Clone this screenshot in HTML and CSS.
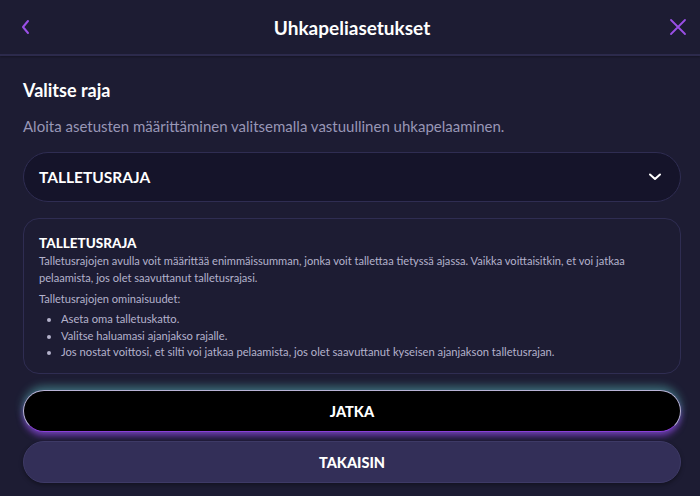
FILE: index.html
```html
<!DOCTYPE html>
<html lang="fi">
<head>
  <meta charset="UTF-8" />
  <meta name="viewport" content="width=device-width, initial-scale=1.0"/>
  <title>Uhkapeliasetukset</title>
  <link rel="stylesheet" href="styles.css">
</head>
<body>
  <header>
    <div class="back-button">
      <svg width="12" height="16" viewBox="0 0 12 16"><path d="M8 2 L3 8 L8 14" fill="none" stroke="#9a4fe6" stroke-width="2" stroke-linecap="round" stroke-linejoin="round"/></svg>
    </div>
    <div class="title-text">Uhkapeliasetukset</div>
    <div class="close-button">
      <svg width="18" height="18" viewBox="0 0 18 18"><path d="M2 2 L16 16 M16 2 L2 16" fill="none" stroke="#9a4fe6" stroke-width="1.8" stroke-linecap="round"/></svg>
    </div>
  </header>

  <main class="content">
    <h2>Valitse raja</h2>
    <p class="intro">Aloita asetusten määrittäminen valitsemalla vastuullinen uhkapelaaminen.</p>

    <div class="select-box">
      <span>TALLETUSRAJA</span>
      <svg width="14" height="10" viewBox="0 0 14 10"><path d="M2 2.5 L7 7 L12 2.5" fill="none" stroke="#ffffff" stroke-width="2" stroke-linecap="round" stroke-linejoin="round"/></svg>
    </div>

    <div class="info-box">
      <h3>TALLETUSRAJA</h3>
      <p>Talletusrajojen avulla voit määrittää enimmäissumman, jonka voit tallettaa tietyssä ajassa. Vaikka voittaisitkin, et voi jatkaa pelaamista, jos olet saavuttanut talletusrajasi.</p>
      <p>Talletusrajojen ominaisuudet:</p>
      <ul>
        <li>Aseta oma talletuskatto.</li>
        <li>Valitse haluamasi ajanjakso rajalle.</li>
        <li>Jos nostat voittosi, et silti voi jatkaa pelaamista, jos olet saavuttanut kyseisen ajanjakson talletusrajan.</li>
      </ul>
    </div>

    <div class="buttons">
      <div class="btn btn-primary">JATKA</div>
      <div class="btn btn-secondary">TAKAISIN</div>
    </div>
  </main>
</body>
</html>
```

FILE: styles.css
```css
body {
  margin: 0;
  background-color: #1d1c33;
  font-family: Lato, "Noto Sans", sans-serif;
  color: #ffffff;
  height: 496px;
  overflow: hidden;
}
header {
  height: 54px;
  display: flex;
  align-items: center;
  justify-content: space-between;
  padding: 0 10px 0 14px;
  border-bottom: 2px solid #2c2a4c;
  box-shadow: 0 1px 2px rgba(0,0,0,0.3);
}
.back-button, .close-button {
  width: 24px;
  display: flex;
  align-items: center;
  justify-content: center;
}
.title-text {
  font-size: 19px;
  font-weight: 700;
  flex-grow: 1;
  text-align: center;
}
.content {
  padding: 0 19px 0 23px;
}
h2 {
  margin: 22px 0 0;
  font-size: 18px;
  font-weight: 700;
  line-height: 24px;
}
.intro {
  margin: 14px 0 0;
  font-size: 15px;
  line-height: 20px;
  color: #9896b6;
}
.select-box {
  margin-top: 16px;
  height: 48px;
  border: 1px solid #2f2d52;
  border-radius: 25px;
  background-color: #15142a;
  display: flex;
  align-items: center;
  justify-content: space-between;
  padding: 0 18px 0 15px;
  font-size: 15.5px;
  font-weight: 700;
}
.info-box {
  margin-top: 16px;
  border: 1px solid #2f2d52;
  border-radius: 16px;
  padding: 15px 14px 14px 15px;
  height: 125px;
}
.info-box h3 {
  margin: 0;
  font-size: 13.5px;
  font-weight: 900;
  line-height: 18px;
}
.info-box p, .info-box ul {
  margin: 0 0 4px;
  font-size: 11.1px;
  line-height: 17px;
  color: #b4b2cc;
}
.info-box ul {
  padding-left: 22px;
  margin: 0;
  font-size: 11.2px;
  line-height: 16.5px;
}
.buttons {
  margin-top: 16px;
  display: flex;
  flex-direction: column;
  gap: 9px;
}
.btn {
  height: 42px;
  border-radius: 22px;
  display: flex;
  align-items: center;
  justify-content: center;
  font-size: 14.5px;
  font-weight: 900;
  box-sizing: border-box;
}
.btn-primary {
  background-color: #000000;
  border: 1px solid #b9b3d6;
  border-bottom-color: #8a3fd8;
  box-shadow: 0 -4px 8px rgba(90, 200, 190, 0.45), 0 4px 6px rgba(138, 63, 216, 0.7);
}
.btn-secondary {
  background-color: #332f58;
  border: 1px solid #3e3a66;
  box-shadow: 0 2px 4px rgba(0,0,0,0.35);
}
```
